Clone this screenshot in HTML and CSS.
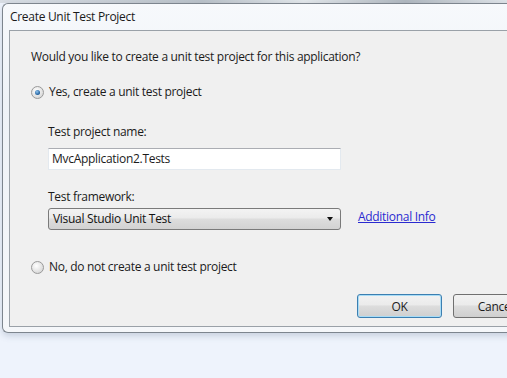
FILE: index.html
```html
<!DOCTYPE html>
<html lang="en">
<head>
  <meta charset="UTF-8" />
  <title>Create Unit Test Project</title>
  <link rel="stylesheet" href="styles.css">
</head>
<body>
  <div class="behind"></div>
  <div class="window">
    <div class="titlebar">Create Unit Test Project</div>
    <div class="panel">
      <p class="question">Would you like to create a unit test project for this application?</p>

      <label class="radio-row yes">
        <span class="radio checked"></span>
        <span>Yes, create a unit test project</span>
      </label>

      <div class="sub">
        <div class="field-label name-label">Test project name:</div>
        <div class="textbox">MvcApplication2.Tests</div>

        <div class="field-label fw-label">Test framework:</div>
        <div class="select-row">
          <div class="select">
            <span>Visual Studio Unit Test</span>
            <span class="arrow"></span>
          </div>
          <a class="link" href="#">Additional Info</a>
        </div>
      </div>

      <label class="radio-row no">
        <span class="radio"></span>
        <span>No, do not create a unit test project</span>
      </label>

      <div class="buttons">
        <button class="btn default">OK</button>
        <button class="btn">Cancel</button>
      </div>
    </div>
  </div>
</body>
</html>
```

FILE: styles.css
```css
body {
  margin: 0;
  width: 507px;
  height: 378px;
  overflow: hidden;
  background: #eef3fc;
  font-family: 'Open Sans', 'Noto Sans', sans-serif;
  font-size: 12px;
  letter-spacing: -0.3px;
  color: #1b1b1b;
}

.behind {
  height: 3px;
  background: linear-gradient(to right, #d8dde4, #b9c0c8 40%, #e2e6ea 60%, #b0b7bf 80%, #dfe3e8);
}

.window {
  margin-left: 2px;
  width: 540px;
  height: 330px;
  border: 1px solid #7d858e;
  border-right: none;
  border-radius: 6px 0 0 6px;
  background: linear-gradient(to bottom, #f7f9fc, #eef2f7 30%, #f5f7fa);
  padding: 0 0 6px 6px;
  box-sizing: border-box;
  box-shadow: 0 3px 6px rgba(90, 110, 140, 0.25);
}

.titlebar {
  height: 26px;
  line-height: 25px;
  padding-left: 1px;
  color: #1a1a1a;
}

.panel {
  height: 297px;
  box-sizing: border-box;
  border: 1px solid #9aa1a8;
  border-right: none;
  background: #f0f0f0;
  padding: 18px 0 0 21px;
  line-height: 16px;
}

.question {
  margin: 0;
}

.radio-row {
  display: flex;
  align-items: center;
  gap: 5px;
}

.radio-row.yes {
  margin-top: 19px;
}

.radio-row.no {
  margin-top: 29px;
}

.radio {
  width: 11px;
  height: 11px;
  border: 1px solid #9a9a9a;
  border-radius: 50%;
  background: radial-gradient(circle at 40% 35%, #ffffff, #dcdcdc 70%, #c8c8c8);
  display: flex;
  align-items: center;
  justify-content: center;
}

.radio.checked::after {
  content: "";
  width: 5px;
  height: 5px;
  border-radius: 50%;
  background: radial-gradient(circle at 40% 35%, #8fc3f0, #1d5d9a 70%);
}

.sub {
  padding-left: 17px;
}

.field-label.name-label {
  margin-top: 24px;
}

.field-label.fw-label {
  margin-top: 19px;
}

.textbox {
  margin-top: 8px;
  width: 293px;
  height: 22px;
  box-sizing: border-box;
  background: #ffffff;
  border: 1px solid #e3e9ef;
  border-top-color: #abadb3;
  padding-left: 3px;
  line-height: 20px;
}

.select-row {
  margin-top: 3px;
  display: flex;
  align-items: flex-start;
  gap: 17px;
}

.select {
  width: 293px;
  height: 22px;
  box-sizing: border-box;
  border: 1px solid #7a7a7a;
  border-radius: 3px;
  background: linear-gradient(to bottom, #f3f3f3, #ebebeb 45%, #dddddd 50%, #d2d2d2);
  display: flex;
  align-items: center;
  justify-content: space-between;
  padding: 0 7px 0 4px;
  color: #111;
}

.arrow {
  width: 0;
  height: 0;
  border-left: 3.5px solid transparent;
  border-right: 3.5px solid transparent;
  border-top: 4px solid #111;
}

.link {
  margin-top: 1px;
  color: #2a2ad0;
  text-decoration: underline;
}

.buttons {
  margin-top: 19px;
  padding-left: 326px;
  display: flex;
  gap: 11px;
}

.btn {
  width: 85px;
  height: 24px;
  font-family: inherit;
  font-size: 12px;
  letter-spacing: -0.3px;
  color: #1b1b1b;
  border: 1px solid #707070;
  border-radius: 3px;
  background: linear-gradient(to bottom, #f2f2f2, #ebebeb 45%, #dddddd 50%, #cfcfcf);
  padding: 0;
  text-align: center;
  flex-shrink: 0;
}

.btn.default {
  border-color: #3c7fb1;
  box-shadow: inset 0 0 0 1px #a8dcf6;
}
```
